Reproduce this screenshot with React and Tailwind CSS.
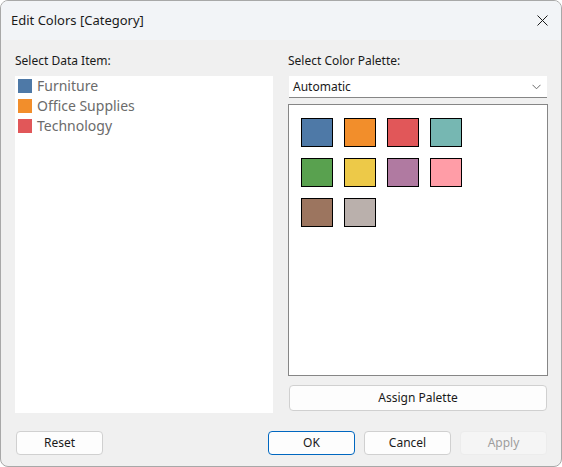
import React from 'react'

const items = [
    { name: 'Furniture', color: '#4e79a7' },
    { name: 'Office Supplies', color: '#f28e2b' },
    { name: 'Technology', color: '#e15759' },
]

const palette = ['#4e79a7', '#f28e2b', '#e15759', '#76b7b2', '#59a14f', '#edc948', '#b07aa1', '#ff9da7', '#9c755f', '#bab0ac']

function Button({ children, variant }) {
    const cls = variant === 'primary'
        ? 'border-[#0067c0] bg-[#fdfdfd] text-[#1a1a1a]'
        : variant === 'disabled'
            ? 'border-[#ececec] bg-[#f5f5f5] text-[#9d9d9d]'
            : 'border-[#d0d0d0] bg-[#fdfdfd] text-[#1a1a1a]'
    return (
        <div className={`${cls} w-[87px] h-[24px] border rounded-[4px] flex items-center justify-center text-[12px]`}>
            {children}
        </div>
    )
}

export default function App() {
    return (
        <div className="w-[562px] h-[467px] bg-white" style={{ fontFamily: '"Noto Sans", "Open Sans", sans-serif' }}>
            <div className="w-full h-full rounded-[8px] border border-[#a8a8a8] overflow-hidden flex flex-col bg-[#f0f0f0]">
                {/* title bar */}
                <div className="h-[39px] bg-[#f2f4f7] flex items-center justify-between pl-[10px] pr-[13px] shrink-0">
                    <p className="text-[13px] text-[#1a1a1a] leading-none">Edit Colors [Category]</p>
                    <svg width="11" height="11" viewBox="0 0 11 11" className="text-[#1a1a1a]">
                        <path d="M0.5 0.5 L10.5 10.5 M10.5 0.5 L0.5 10.5" stroke="currentColor" strokeWidth="1" fill="none" />
                    </svg>
                </div>

                {/* body */}
                <div className="flex gap-[15px] pl-[14px] pr-[13px] pt-[13px]">
                    <div className="w-[258px] flex flex-col">
                        <p className="text-[12px] leading-[16px] h-[16px] text-[#1a1a1a] mb-[7px]">Select Data Item:</p>
                        <div className="bg-white h-[337px] pl-[3px]">
                            {items.map((it) => (
                                <div key={it.name} className="flex items-center h-[20px] gap-[5px]">
                                    <div className="w-[14px] h-[14px]" style={{ backgroundColor: it.color }} />
                                    <p className="text-[14px] text-[#6b6b6b] leading-none">{it.name}</p>
                                </div>
                            ))}
                        </div>
                    </div>

                    <div className="w-[260px] flex flex-col">
                        <p className="text-[12px] leading-[16px] h-[16px] text-[#1a1a1a] mb-[7px]">Select Color Palette:</p>
                        <div className="mx-[1px] h-[22px] bg-white border-b border-[#868686] flex items-center justify-between pl-[4px] pr-[6px]">
                            <p className="text-[12px] text-[#1a1a1a] leading-none">Automatic</p>
                            <svg width="9" height="6" viewBox="0 0 9 6" className="text-[#6b6b6b]">
                                <path d="M0.5 0.8 L4.5 4.8 L8.5 0.8" stroke="currentColor" strokeWidth="1" fill="none" />
                            </svg>
                        </div>
                        <div className="mt-[6px] h-[272px] bg-white border border-[#868686] pl-[12px] pt-[13px]">
                            <div className="grid grid-cols-[repeat(4,32px)] gap-[11px]">
                                {palette.map((c) => (
                                    <div key={c} className="w-[32px] h-[29px] border border-black" style={{ backgroundColor: c }} />
                                ))}
                            </div>
                        </div>
                        <div className="mt-[9px] mx-[1px] h-[26px] border border-[#d0d0d0] bg-[#fdfdfd] rounded-[4px] flex items-center justify-center text-[12px] text-[#1a1a1a]">
                            Assign Palette
                        </div>
                    </div>
                </div>

                {/* footer */}
                <div className="flex items-center justify-between pl-[15px] pr-[14px] mt-[18px]">
                    <Button>Reset</Button>
                    <div className="flex gap-[9px]">
                        <Button variant="primary">OK</Button>
                        <Button>Cancel</Button>
                        <Button variant="disabled">Apply</Button>
                    </div>
                </div>
            </div>
        </div>
    )
}
